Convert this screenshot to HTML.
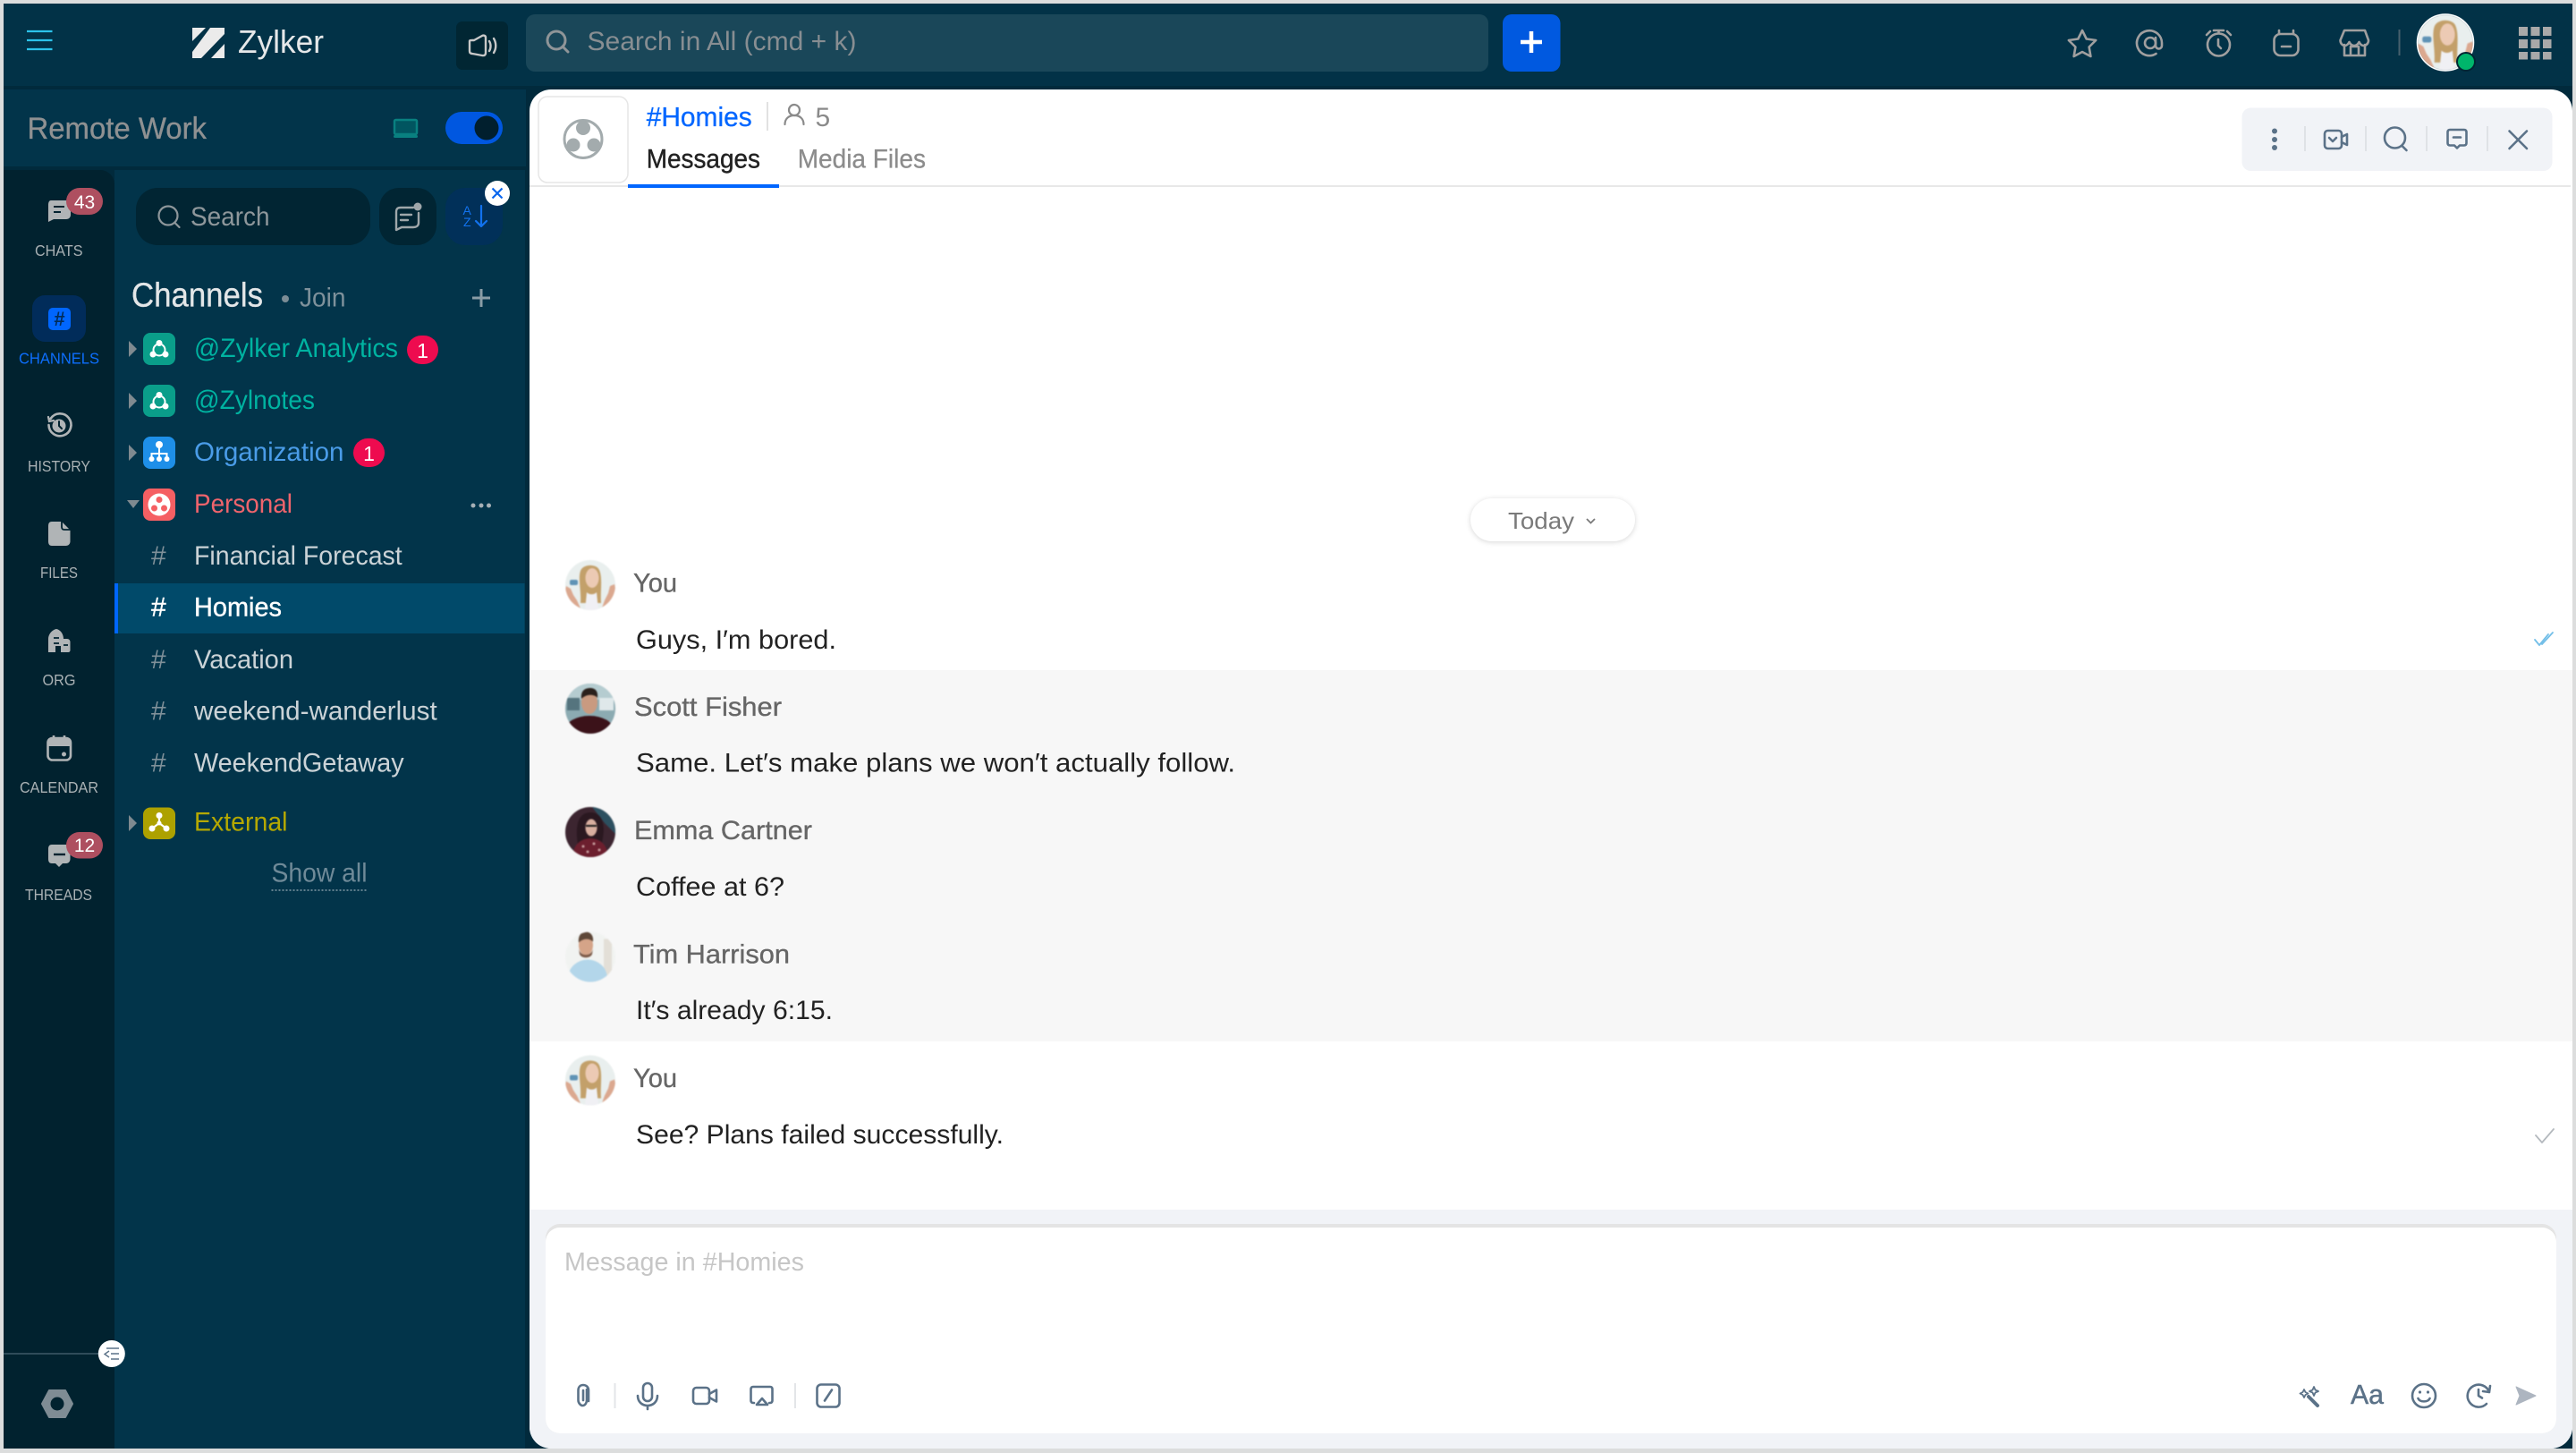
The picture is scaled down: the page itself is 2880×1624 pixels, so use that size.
<!DOCTYPE html>
<html lang="en"><head><meta charset="utf-8"><title>Zylker Channels</title>
<style>
html,body{margin:0;padding:0;background:#dcdddd;width:2880px;height:1624px;overflow:hidden}
svg{display:block}
text{font-family:"Liberation Sans",sans-serif;white-space:pre}
.r{font-size:17.5px;fill:#a9b1b4}
.l{font-size:30px}
.m{font-size:30px;fill:#222}
.n{font-size:30px;fill:#666;stroke:#666;stroke-width:.35}
.ic{fill:none;stroke:#5b7288;stroke-width:2.6;stroke-linecap:round;stroke-linejoin:round}
.tp{fill:none;stroke:#a09f9f;stroke-width:2.6;stroke-linecap:round;stroke-linejoin:round}
.soft{filter:blur(.7px)}
</style></head><body>
<svg xmlns="http://www.w3.org/2000/svg" width="2880" height="1624" viewBox="0 0 2880 1624">
<defs>
<clipPath id="c"><circle r="28"/></clipPath>
<g id="woman" clip-path="url(#c)">
 <rect x="-28" y="-28" width="56" height="56" fill="#e9efee"/>
 <rect x="-23" y="-6" width="9" height="6" rx="2" fill="#5f93b5"/>
 <path d="M-11 20c1-14-3-27 0-36 3-8 18-8 21-1 4 9 1 24 2 37z" fill="#c3a06a"/>
 <ellipse cx="2" cy="-8" rx="7.500" ry="11" fill="#eccab4"/>
 <path d="M-4 8c3 3 8 3 11 0l2 20h-15z" fill="#f0f0f4"/>
 <path d="M-27 1l5 3 3 7 4 6 5 11h-14l-6-14zM27-1l-5 2-2 8-4 8-4 11h13l5-15z" fill="#dba88f"/>
</g>
<g id="scott" clip-path="url(#c)">
 <rect x="-28" y="-28" width="56" height="56" fill="#8cabb2"/>
 <rect x="-28" y="-28" width="56" height="18" fill="#b5ccd0"/>
 <rect x="-26" y="-12" width="14" height="14" fill="#55747e"/>
 <rect x="10" y="-12" width="16" height="14" fill="#dfe8ea"/>
 <ellipse cx="-1" cy="24" rx="27" ry="16" fill="#3b1219"/>
 <ellipse cx="-1" cy="-7" rx="9" ry="13" fill="#c99a80"/>
 <path d="M-10-11c-1-10 5-12 10-12s9 3 8 11c-3-4-12-5-18 1z" fill="#2b211c"/>
</g>
<g id="emma" clip-path="url(#c)">
 <rect x="-28" y="-28" width="56" height="56" fill="#3c2530"/>
 <path d="M2-28h26v30l-12-12z" fill="#2c5060"/>
 <path d="M-14 14c-3-18-1-36 14-36s17 16 13 34z" fill="#2a1820"/>
 <ellipse cx="1" cy="-5" rx="6.500" ry="9.500" fill="#d8ae9f"/>
 <path d="M-5-7h12" stroke="#1c1c1c" stroke-width="2"/>
 <ellipse cx="0" cy="24" rx="19" ry="17" fill="#6c1f2e"/>
 <g fill="#c9a0a0"><circle cx="-8" cy="16" r="1.500"/><circle cx="4" cy="13" r="1.500"/><circle cx="10" cy="20" r="1.500"/><circle cx="-3" cy="22" r="1.500"/></g>
</g>
<g id="tim" clip-path="url(#c)">
 <rect x="-28" y="-28" width="56" height="56" fill="#f1f3f1"/>
 <rect x="15" y="-20" width="9" height="42" fill="#e3dfd7"/>
 <ellipse cx="-3" cy="24" rx="22" ry="21" fill="#b3d6ea"/>
 <ellipse cx="-5" cy="-13" rx="8" ry="11" fill="#d5a488"/>
 <path d="M-13-16c-1-9 4-12 8-12s9 3 8 11c-4-4-11-4-16 1z" fill="#5e4738"/>
 <path d="M-13-9c2 9 14 9 16 0l-1 6c-2 5-12 5-14 0z" fill="#7c5a48"/>
</g>
</defs>

<rect x="0" y="0" width="2880" height="1624" fill="#dcdddd"/>
<rect x="4" y="4" width="2872" height="1615" fill="#012a3c"/>
<!-- top bar -->
<rect x="4" y="4" width="2872" height="92" fill="#023247"/>
<path d="M30 35h28.500M30 45h28.500M30 55h28.500" stroke="#2cc3ea" stroke-width="2.200"/>
<g fill="#ebebeb">
 <path d="M215 31h15l-15 15z"/>
 <path d="M235 31h16v7l-26 27h-10v-7z"/>
 <path d="M251 49v16h-15z"/>
</g>
<text x="266" y="59" font-size="36" fill="#e6e8e9" textLength="96" lengthAdjust="spacingAndGlyphs">Zylker</text>
<rect x="510" y="24" width="58" height="54" rx="7" fill="#012633"/>
<g fill="none" stroke="#c8c8c8" stroke-width="2.400" stroke-linejoin="round" stroke-linecap="round">
 <path d="M525 46v11c0 2 1 3 3 3l3 .5 8 1.500c3 .500 4-1 4-3V42c0-2-2-3-4-2l-9 5h-2c-2 0-3 0-3 1z"/>
 <path d="M547 46c2 3 2 8 0 11M552 43c3 5 3 11 0 16"/>
</g>
<rect x="588" y="16" width="1076" height="64" rx="10" fill="#1a4759"/>
<circle cx="622" cy="45" r="10" fill="none" stroke="#8f9598" stroke-width="3"/><path d="M629 52l6 6" stroke="#8f9598" stroke-width="3" stroke-linecap="round"/>
<text x="656.500" y="56" font-size="30" fill="#888e92" textLength="301" lengthAdjust="spacingAndGlyphs">Search in All (cmd + k)</text>
<rect x="1680" y="16" width="64.500" height="64" rx="10" fill="#0059e0"/>
<path d="M1712 35v24M1700 47h24" stroke="#fff" stroke-width="4.500"/>

<path class="tp" d="M2328 34l4.700 9.500 10.500 1.500-7.600 7.500 1.800 10.500-9.400-5-9.400 5 1.800-10.500-7.600-7.500 10.500-1.500z"/>
<path class="tp" d="M2410 42v9a3.500 3.500 0 0 0 7 0v-3a14 14 0 1 0-6.500 12"/><circle class="tp" cx="2404" cy="48" r="6"/>
<g class="tp"><circle cx="2480.500" cy="50" r="12.500"/><path d="M2475 34h11M2480.500 34v3M2467 39l4-4M2494 39l-4-4M2480 44v7l3 3"/></g>
<g class="tp"><rect x="2542.500" y="38" width="27" height="24" rx="7"/><path d="M2548 38v-4M2564 38v-4M2551 52h10"/></g>
<g class="tp"><path d="M2621 34h23l4 11c0 4-3 6-5.500 6s-4-2-5-4c-1 2-3 4-5.500 4s-4.500-2-5.500-4c-1 2-3 4-5 4s-5-2-5-6z"/><path d="M2621 50v12h23V50M2628 62V52h9v10"/></g>
<rect x="2681.500" y="33" width="2" height="29" fill="#47606d"/>
<g class="soft" transform="translate(2734 47.500) scale(1.120)"><use href="#woman"/></g>
<circle cx="2734" cy="47.500" r="31.500" fill="none" stroke="#fff" stroke-width="1.500"/>
<circle cx="2757" cy="69" r="10" fill="#00b56b" stroke="#012633" stroke-width="2"/>
<g fill="#a9a9a9">
 <rect x="2816" y="30" width="10" height="10"/><rect x="2829.500" y="30" width="10" height="10"/><rect x="2843" y="30" width="9.500" height="10"/>
 <rect x="2816" y="44" width="10" height="10"/><rect x="2829.500" y="44" width="10" height="10"/><rect x="2843" y="44" width="9.500" height="10"/>
 <rect x="2816" y="58" width="10" height="8.500"/><rect x="2829.500" y="58" width="10" height="8.500"/><rect x="2843" y="58" width="9.500" height="8.500"/>
</g>

<!-- workspace strip -->
<rect x="4" y="100" width="584" height="86" fill="#02344a"/>
<text x="30.500" y="155" font-size="34" fill="#8f9192" stroke="#8f9192" stroke-width=".3" textLength="200.500" lengthAdjust="spacingAndGlyphs">Remote Work</text>
<rect x="441" y="134" width="25" height="16" rx="1.500" fill="#015560" stroke="#098080" stroke-width="2.500"/><rect x="440" y="151" width="27" height="3" rx="1.500" fill="#098080"/>
<rect x="498" y="125" width="64" height="36" rx="18" fill="#0057e0"/><circle cx="544" cy="143" r="13.500" fill="#011f2e"/>

<!-- sidebar -->
<rect x="128" y="190" width="459" height="1429" fill="#02344a"/>
<path d="M4 190h108a16 16 0 0 1 16 16v1413H4z" fill="#01222f"/>

<rect x="152" y="210" width="262" height="64" rx="24" fill="#012533"/>
<circle cx="188" cy="241" r="10.500" fill="none" stroke="#8e979b" stroke-width="2.200"/><path d="M195.500 249l5 5" stroke="#8e979b" stroke-width="2.200" stroke-linecap="round"/>
<text x="213" y="252" font-size="30" fill="#8e979b" textLength="88.500" lengthAdjust="spacingAndGlyphs">Search</text>
<rect x="424" y="210" width="64" height="64" rx="22" fill="#012533"/>
<g fill="none" stroke="#9fa7aa" stroke-width="2.400" stroke-linecap="round" stroke-linejoin="round"><path d="M462 232h-14c-4 0-5 2-5 5v20l6-3h13c4 0 6-2 6-5v-11"/><path d="M448 240h12M448 246h8"/></g><circle cx="467" cy="231" r="4.500" fill="#9fa7aa"/>
<rect x="498" y="210" width="64" height="64" rx="22" fill="#013059"/>
<text x="517.500" y="240" font-size="14" fill="#1272ee">A</text><text x="518" y="253" font-size="14" fill="#1272ee">Z</text>
<path d="M538 230v23M532 247l6 6 6-6" fill="none" stroke="#1272ee" stroke-width="2.200" stroke-linecap="round" stroke-linejoin="round"/>
<circle cx="556" cy="216" r="14" fill="#fff"/><path d="M550.500 210.500l11 11M561.500 210.500l-11 11" stroke="#0a66ee" stroke-width="2.200"/>

<text x="147" y="342.500" font-size="38" fill="#e3e6e8" stroke="#e3e6e8" stroke-width=".3" textLength="147" lengthAdjust="spacingAndGlyphs">Channels</text>
<circle cx="319" cy="334" r="4" fill="#7c8d96"/>
<text x="335" y="342.500" class="l" fill="#7e919b" textLength="51.500" lengthAdjust="spacingAndGlyphs">Join</text>
<path d="M538 323v20M528 333h20" stroke="#8a9da6" stroke-width="3"/>

<!-- rows -->
<path d="M144 381l9 9-9 9z" fill="#7f8a90"/>
<rect x="160" y="372" width="36" height="36" rx="8" fill="#0a9e8a"/>
<circle cx="178" cy="391" r="6.500" fill="none" stroke="#fff" stroke-width="2"/>
<g fill="#fff"><circle cx="178" cy="383.500" r="3.500"/><circle cx="171" cy="396" r="3.500"/><circle cx="185" cy="396" r="3.500"/></g>
<text x="217" y="399" class="l" fill="#00b3a1" textLength="228" lengthAdjust="spacingAndGlyphs">@Zylker Analytics</text>
<rect x="455" y="375" width="35" height="32" rx="16" fill="#ee0b4f"/><text x="472.500" y="400" font-size="23" fill="#fff" text-anchor="middle">1</text>

<path d="M144 439l9 9-9 9z" fill="#7f8a90"/>
<rect x="160" y="430" width="36" height="36" rx="8" fill="#0a9e8a"/>
<circle cx="178" cy="449" r="6.500" fill="none" stroke="#fff" stroke-width="2"/>
<g fill="#fff"><circle cx="178" cy="441.500" r="3.500"/><circle cx="171" cy="454" r="3.500"/><circle cx="185" cy="454" r="3.500"/></g>
<text x="217" y="457" class="l" fill="#00b3a1" textLength="135" lengthAdjust="spacingAndGlyphs">@Zylnotes</text>

<path d="M144 497l9 9-9 9z" fill="#7f8a90"/>
<rect x="160" y="488" width="36" height="36" rx="8" fill="#1e8fe8"/>
<g fill="#fff"><circle cx="178" cy="497" r="4"/><circle cx="169.500" cy="513" r="3"/><circle cx="178" cy="513" r="3"/><circle cx="186.500" cy="513" r="3"/></g><path d="M178 497v14M169.500 511v-4h17v4" fill="none" stroke="#fff" stroke-width="2"/>
<text x="217" y="515" class="l" fill="#4a9ce8" textLength="167.500" lengthAdjust="spacingAndGlyphs">Organization</text>
<rect x="395" y="490" width="35" height="32" rx="16" fill="#ee0b4f"/><text x="412.500" y="515" font-size="23" fill="#fff" text-anchor="middle">1</text>

<path d="M142 559h14l-7 9z" fill="#7f8a90"/>
<rect x="160" y="546" width="36" height="36" rx="8" fill="#f55f63"/>
<circle cx="178" cy="564" r="12.500" fill="#fff"/><g fill="#f55f63"><circle cx="178" cy="558.500" r="3.500"/><circle cx="172.500" cy="568" r="3.500"/><circle cx="183.500" cy="568" r="3.500"/></g>
<text x="217" y="573" class="l" fill="#f0646c" textLength="110" lengthAdjust="spacingAndGlyphs">Personal</text>
<g fill="#a6b0b6"><circle cx="529" cy="565" r="2.500"/><circle cx="538" cy="565" r="2.500"/><circle cx="546.500" cy="565" r="2.500"/></g>

<text x="169" y="631" class="l" fill="#7f9099">#</text>
<text x="217" y="631" class="l" fill="#cbd3d7" textLength="232.700" lengthAdjust="spacingAndGlyphs">Financial Forecast</text>
<rect x="128" y="652" width="458.500" height="56" fill="#014a6a"/><rect x="128" y="652" width="4" height="56" fill="#0066ff"/>
<text x="169" y="688.500" class="l" fill="#fff" stroke="#fff" stroke-width=".4">#</text>
<text x="217" y="688.500" class="l" fill="#fff" stroke="#fff" stroke-width=".4" textLength="98" lengthAdjust="spacingAndGlyphs">Homies</text>
<text x="169" y="747" class="l" fill="#7f9099">#</text>
<text x="217" y="747" class="l" fill="#cbd3d7" textLength="111" lengthAdjust="spacingAndGlyphs">Vacation</text>
<text x="169" y="804.500" class="l" fill="#7f9099">#</text>
<text x="217" y="804.500" class="l" fill="#cbd3d7" textLength="271.700" lengthAdjust="spacingAndGlyphs">weekend-wanderlust</text>
<text x="169" y="862.500" class="l" fill="#7f9099">#</text>
<text x="217" y="862.500" class="l" fill="#cbd3d7" textLength="234.600" lengthAdjust="spacingAndGlyphs">WeekendGetaway</text>

<path d="M144 911l9 9-9 9z" fill="#7f8a90"/>
<rect x="160" y="902.500" width="36" height="35.500" rx="8" fill="#ada100"/>
<g fill="#fff"><circle cx="178" cy="911.500" r="3.500"/><circle cx="170" cy="926" r="3.500"/><circle cx="186" cy="926" r="3.500"/><circle cx="178" cy="920" r="2.500"/></g><path d="M178 912v8M178 920l-8 6M178 920l8 6" stroke="#fff" stroke-width="2.200" fill="none"/>
<text x="217" y="928.500" class="l" fill="#b5a800" textLength="104.500" lengthAdjust="spacingAndGlyphs">External</text>
<text x="303.500" y="985.500" class="l" fill="#6f8a98" textLength="107" lengthAdjust="spacingAndGlyphs">Show all</text>
<path d="M303.500 995h107" stroke="#6f8a98" stroke-width="1.800" stroke-dasharray="2 2"/>

<!-- rail -->
<path d="M57 224h17c3 0 5 2 5 5v11c0 3-2 5-5 5H60l-6 3v-19c0-3 1-5 3-5z" fill="#b0b4b6"/><path d="M60 231h12M60 237h8" stroke="#01222f" stroke-width="2"/>
<rect x="74" y="210" width="41" height="30" rx="15" fill="#ae4f60"/><text x="94.500" y="233" font-size="21" fill="#fff" text-anchor="middle">43</text>
<text class="r" x="39" y="286" textLength="53.500" lengthAdjust="spacingAndGlyphs">CHATS</text>

<rect x="36" y="330" width="60" height="52" rx="14" fill="#012c5a"/>
<rect x="54" y="344" width="25" height="25" rx="5" fill="#0066ff"/><text x="66.500" y="364" font-size="22" font-weight="bold" fill="#012c5a" text-anchor="middle">#</text>
<text x="21" y="406.500" font-size="17.500" fill="#0d6efd" textLength="90" lengthAdjust="spacingAndGlyphs">CHANNELS</text>

<g fill="none" stroke="#b0b4b6" stroke-linecap="round"><path d="M56.500 468a12.500 12.500 0 1 1-2 7" stroke-width="2.600"/><circle cx="66" cy="476" r="7.500" fill="#b0b4b6" stroke="none"/><path d="M66 471v5l3 3" stroke="#01222f" stroke-width="2"/><path d="M54 466l1 5 5-1" stroke-width="2.200"/></g>
<text class="r" x="31" y="527" textLength="70" lengthAdjust="spacingAndGlyphs">HISTORY</text>

<path d="M58 583h11l9.500 9.500V605c0 3-2 5-5 5H58c-3 0-4-2-4-5v-17c0-3 1-5 4-5z" fill="#b0b4b6"/><path d="M69 583v6c0 2 1 3 3 3h6.500" fill="none" stroke="#01222f" stroke-width="1.800"/>
<text class="r" x="45" y="646" textLength="42" lengthAdjust="spacingAndGlyphs">FILES</text>

<path d="M54 729v-15c0-5 4-10 9-11 5 1 8 6 8 11h4c2 0 3.500 1.500 3.500 3.500V727c0 1-1 2-2 2H68v-7h-6v7z" fill="#b0b4b6"/><path d="M60 713h6M60 719h6M71 721h5" stroke="#01222f" stroke-width="1.800"/>
<text class="r" x="47.500" y="766" textLength="37" lengthAdjust="spacingAndGlyphs">ORG</text>

<rect x="53.500" y="825" width="25.500" height="24.500" rx="5" fill="none" stroke="#b0b4b6" stroke-width="2.600"/><path d="M53 834v-4c0-3 2-6 5-6h16c3 0 5 3 5 6v4z" fill="#b0b4b6"/><path d="M60 825v-3M72 825v-3" stroke="#b0b4b6" stroke-width="2.600"/><circle cx="71.500" cy="843" r="2.500" fill="#b0b4b6"/>
<text class="r" x="22" y="886" textLength="88" lengthAdjust="spacingAndGlyphs">CALENDAR</text>

<path d="M58 944h16c3 0 4.500 2 4.500 5v11c0 3-2 5-4.500 5h-4l-4 4-4-4h-4c-3 0-4-2-4-5v-11c0-3 1-5 4-5z" fill="#b0b4b6"/><path d="M60 955h13" stroke="#01222f" stroke-width="2.400"/>
<rect x="74" y="930" width="41" height="29.500" rx="14.700" fill="#ae4f60"/><text x="94.500" y="952" font-size="21" fill="#fff" text-anchor="middle">12</text>
<text class="r" x="28" y="1006" textLength="75" lengthAdjust="spacingAndGlyphs">THREADS</text>

<rect x="4" y="1512" width="106" height="2" fill="#2f4c5a"/>
<circle cx="124.800" cy="1513" r="15" fill="#fff"/>
<path d="M119 1507h14M124 1513h9M124 1519h9M122 1510l-5 3.500 5 3.500" fill="none" stroke="#5b7288" stroke-width="1.400"/>
<path d="M55 1554h18l8 15-8 15H55l-8-15z" fill="#7f8c94" stroke="#7f8c94" stroke-width="2" stroke-linejoin="round"/><circle cx="64" cy="1569" r="7.500" fill="#01222f"/>

<!-- main panel -->
<path d="M616 100H2852a24 24 0 0 1 24 24V1595a24 24 0 0 1-24 24H616a24 24 0 0 1-24-24V124a24 24 0 0 1 24-24z" fill="#fff"/>
<rect x="592" y="207" width="2282" height="2" fill="#e8e8e8"/>
<rect x="602" y="108" width="100" height="96" rx="10" fill="#fff" stroke="#e6e6e6" stroke-width="1.500"/>
<circle cx="652" cy="155.500" r="21" fill="none" stroke="#a3abad" stroke-width="3"/>
<g fill="#a3abad"><circle cx="652" cy="143" r="8"/><circle cx="641" cy="162" r="7.500"/><circle cx="664" cy="162" r="7.500"/></g>
<text x="722.700" y="141" font-size="31" fill="#0066ff" stroke="#0066ff" stroke-width=".3" textLength="118" lengthAdjust="spacingAndGlyphs">#Homies</text>
<rect x="857" y="114" width="2" height="32" fill="#e2e2e2"/>
<g fill="none" stroke="#8a8a8a" stroke-width="2.200" stroke-linecap="round"><circle cx="888" cy="123" r="6"/><path d="M877.500 139c0-6 4-10 10.500-10s10.500 4 10.500 10"/></g>
<text x="911.500" y="141" font-size="30" fill="#8a8a8a">5</text>
<text x="722.700" y="187.500" font-size="30" fill="#222" stroke="#222" stroke-width=".4" textLength="127.300" lengthAdjust="spacingAndGlyphs">Messages</text>
<text x="891.700" y="187.500" font-size="30" fill="#8c8c8c" stroke="#8c8c8c" stroke-width=".3" textLength="143.300" lengthAdjust="spacingAndGlyphs">Media Files</text>
<rect x="702" y="206" width="169" height="4" fill="#0066ff"/>

<rect x="2506.500" y="120.500" width="347" height="70.500" rx="10" fill="#f1f3f7"/>
<g fill="#5b7288"><circle cx="2543" cy="146.500" r="3"/><circle cx="2543" cy="156" r="3"/><circle cx="2543" cy="165" r="3"/></g>
<g fill="#dfe2e6"><rect x="2576" y="141" width="2" height="28"/><rect x="2644" y="141" width="2" height="28"/><rect x="2712" y="141" width="2" height="28"/><rect x="2780" y="141" width="2" height="28"/></g>
<g class="ic"><rect x="2599" y="146" width="19" height="20" rx="3.500"/><path d="M2618 153l6-3v12l-6-3M2604 154l4 4 4-4"/></g>
<g class="ic"><circle cx="2677.500" cy="154" r="11.500"/><path d="M2685.500 163l5 5"/></g>
<g class="ic"><path d="M2739 145h16c1.500 0 2.500 1 2.500 2.500v12.500c0 1.500-1 2.500-2.500 2.500h-5l-3 3-3-3h-5c-1.500 0-2.500-1-2.500-2.500v-12.500c0-1.500 1-2.500 2.500-2.500zM2743 153.500h8"/></g>
<g class="ic"><path d="M2805.500 146.500l19.500 19.500M2825 146.500l-19.500 19.500"/></g>

<!-- messages -->
<rect x="592" y="749" width="2284" height="415" fill="#f7f7f7"/>
<rect x="1644" y="557" width="184" height="48" rx="24" fill="#fff" style="filter:drop-shadow(0 1px 3px rgba(0,0,0,.16))"/>
<text x="1686" y="591" font-size="26" fill="#7a7a7a" textLength="74" lengthAdjust="spacingAndGlyphs">Today</text>
<path d="M1774 580l4.500 4.500 4.500-4.500" fill="none" stroke="#7a7a7a" stroke-width="1.800"/>

<g class="soft" transform="translate(660 654)"><use href="#woman"/></g>
<text class="n" x="708" y="661.500" textLength="49" lengthAdjust="spacingAndGlyphs">You</text>
<text class="m" x="711" y="725" textLength="224" lengthAdjust="spacingAndGlyphs">Guys, I′m bored.</text>
<path d="M2834 715l5 6 10-12M2842 720l12-13" fill="none" stroke="#74bfe8" stroke-width="1.800" stroke-linecap="round" stroke-linejoin="round"/>

<g class="soft" transform="translate(660 792)"><use href="#scott"/></g>
<text class="n" x="709" y="800" textLength="165" lengthAdjust="spacingAndGlyphs">Scott Fisher</text>
<text class="m" x="711" y="862.500" textLength="670" lengthAdjust="spacingAndGlyphs">Same. Let′s make plans we won′t actually follow.</text>

<g class="soft" transform="translate(660 930)"><use href="#emma"/></g>
<text class="n" x="709" y="938" textLength="199" lengthAdjust="spacingAndGlyphs">Emma Cartner</text>
<text class="m" x="711" y="1001" textLength="166" lengthAdjust="spacingAndGlyphs">Coffee at 6?</text>

<g class="soft" transform="translate(660 1069.500)"><use href="#tim"/></g>
<text class="n" x="708" y="1076.500" textLength="175" lengthAdjust="spacingAndGlyphs">Tim Harrison</text>
<text class="m" x="711" y="1139" textLength="220" lengthAdjust="spacingAndGlyphs">It′s already 6:15.</text>

<g class="soft" transform="translate(660 1207.500)"><use href="#woman"/></g>
<text class="n" x="708" y="1215" textLength="49" lengthAdjust="spacingAndGlyphs">You</text>
<text class="m" x="711" y="1278" textLength="411" lengthAdjust="spacingAndGlyphs">See? Plans failed successfully.</text>
<path d="M2835 1269l7 8 13-15" fill="none" stroke="#b4b9be" stroke-width="1.800" stroke-linecap="round" stroke-linejoin="round"/>

<!-- composer -->
<path d="M592 1352H2876V1595a24 24 0 0 1-24 24H616a24 24 0 0 1-24-24z" fill="#f1f3f7"/>
<rect x="610" y="1368" width="2248" height="234" rx="16" fill="#e4e4e4"/>
<path d="M626 1372H2842a16 16 0 0 1 16 16V1586a16 16 0 0 1-16 16H626a16 16 0 0 1-16-16V1388a16 16 0 0 1 16-16z" fill="#fff"/>
<text x="631" y="1420" font-size="28.500" fill="#c6c6c6" textLength="268" lengthAdjust="spacingAndGlyphs">Message in #Homies</text>

<g class="ic">
 <path d="M656 1553v12c0 3-2 6-4.500 6s-5-3-5-6v-11c0-4 2.500-6 5.500-6s6 2 6 6v12M652 1554v11"/>
 <path d="M719 1551a5 5 0 0 1 10 0v10a5 5 0 0 1-10 0zM713 1560c0 7 5 11 11 11s11-4 11-11M724 1571v4"/>
 <rect x="775" y="1551" width="18" height="18" rx="3.500"/><path d="M793 1558l8-4.500v13l-8-4.500"/>
 <path d="M843 1568h-1c-1.500 0-2.500-1-2.500-2.500v-13c0-1.500 1-2.500 2.500-2.500h19c1.500 0 2.500 1 2.500 2.500v13c0 1.500-1 2.500-2.500 2.500h-1M852 1563l-6 7h12z"/>
 <rect x="913.500" y="1547.500" width="25" height="25" rx="4.500"/><path d="M922 1565.500l8-12"/>
</g>
<rect x="686.500" y="1546" width="2" height="28" fill="#e3e5e8"/><rect x="888" y="1546" width="2" height="28" fill="#e3e5e8"/>

<g class="ic">
 <path d="M2581 1561l10 10" stroke-width="4"/>
 <path d="M2576 1553l1.500 3 3 1.500-3 1.500-1.500 3-1.500-3-3-1.500 3-1.500zM2587 1550l1.500 3.500 3.500 1.500-3.500 1.500-1.500 3.500-1.500-3.500-3.500-1.500 3.500-1.500z" stroke-width="1.800"/>
 <circle cx="2710" cy="1560" r="13"/><path d="M2703.500 1563c2 4.500 11 4.500 13 0"/>
 <path d="M2780 1569a12.500 12.500 0 1 1 3-13M2784 1549l-1 7-7-1M2771 1553v7l4 2.500"/>
</g>
<circle cx="2705.500" cy="1556" r="1.600" fill="#5b7288"/><circle cx="2714.500" cy="1556" r="1.600" fill="#5b7288"/>
<text x="2628" y="1569" font-size="31" fill="#5b7288" stroke="#5b7288" stroke-width=".5" textLength="37" lengthAdjust="spacingAndGlyphs">Aa</text>
<path d="M2813 1550l22 10-22 10 4-10z" fill="#adb5c0" stroke="#adb5c0" stroke-width="1" stroke-linejoin="round"/>
</svg>
</body></html>
